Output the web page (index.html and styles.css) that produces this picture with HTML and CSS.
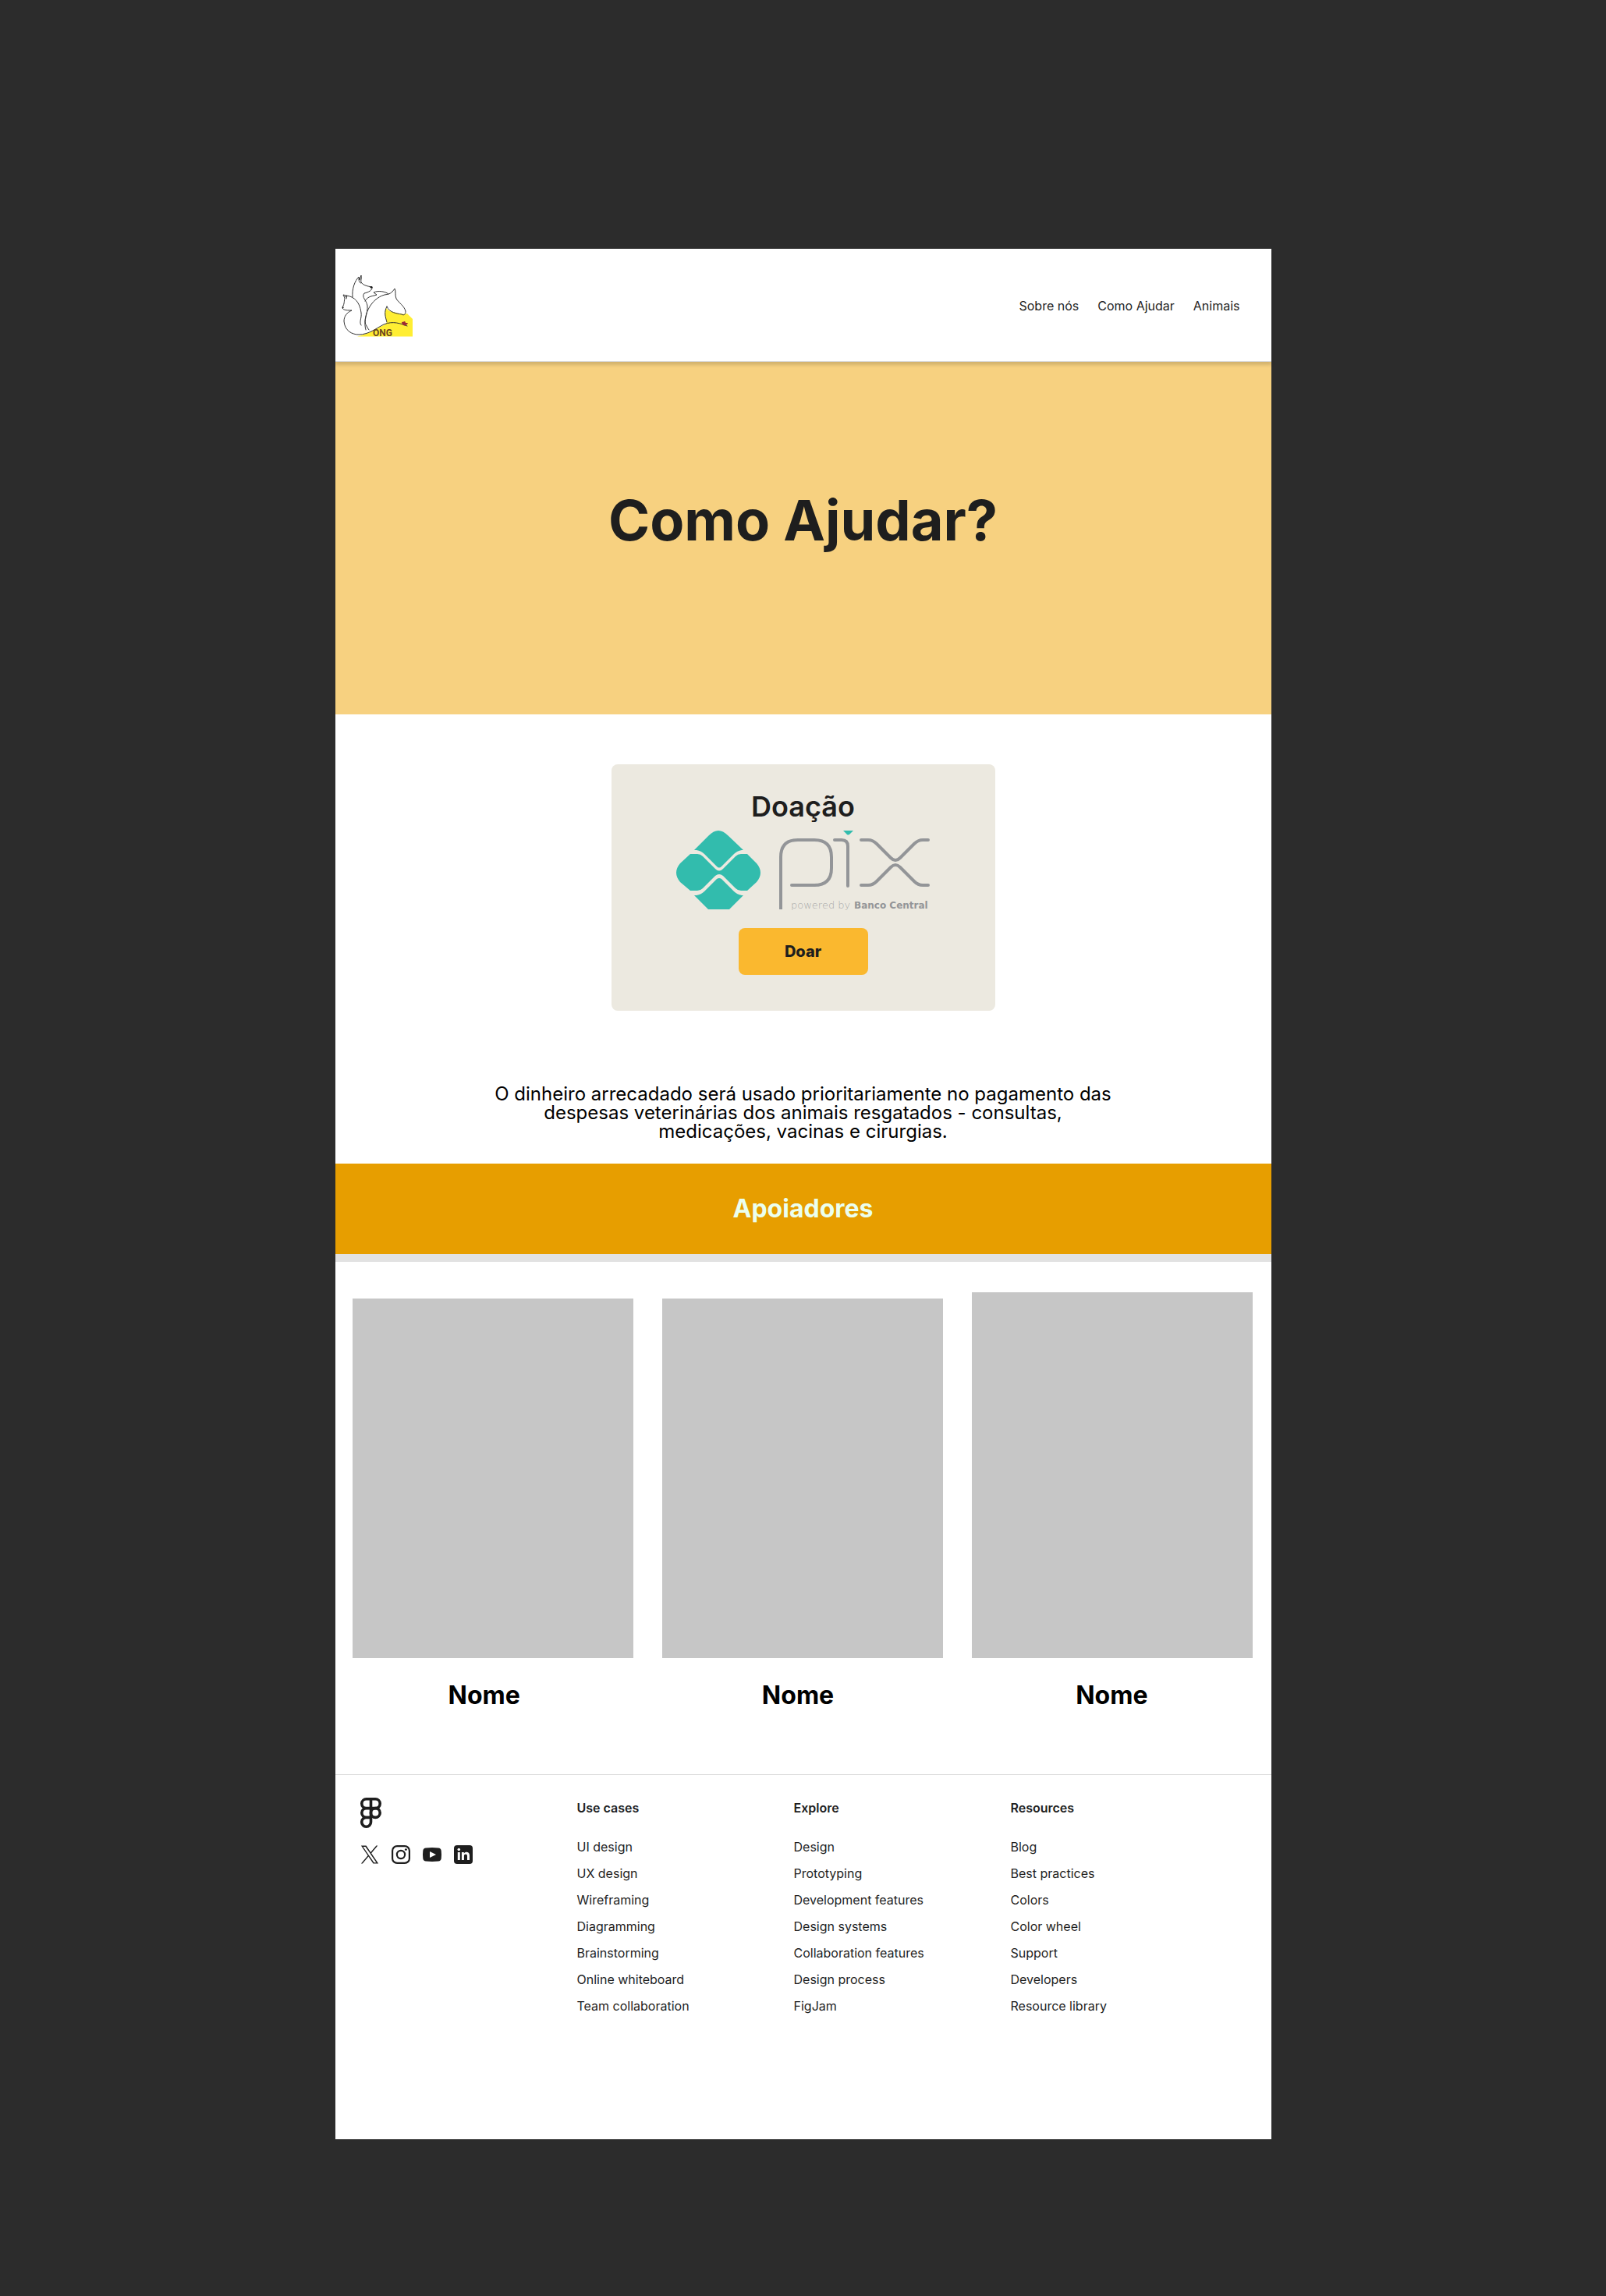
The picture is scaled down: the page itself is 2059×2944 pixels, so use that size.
FILE: index.html
```html
<!DOCTYPE html>
<html lang="pt-BR">
<head>
<meta charset="utf-8">
<meta name="viewport" content="width=device-width, initial-scale=1">
<title>Como Ajudar?</title>
<link rel="stylesheet" href="styles.css">
</head>
<body>
<div class="page">
  <header class="header">
    <a class="brand" href="#" aria-label="ONG">
      <svg class="brand-logo" viewBox="0 0 92 80" aria-hidden="true">
        <path d="M20 79.500C36 76 44 69 56 64L58 61C55 53 55 48 57 43C60 47 65 48 70 49C75 51 82 51 84 50L91 57V79.500Z" fill="#ffee33"/>
        <g fill="none" stroke="#333" stroke-width="1" stroke-linecap="round" stroke-linejoin="round">
          <path d="M14 29C13 18 17 8 22 3L23 7L25 1C26 5 24 8 25 10C28 14 33 15 39 16C40 20 34 23 29 24C25 29 32 33 33 40C34 50 27 60 32 66C33 68 34 70 35 71"/>
          <path d="M22 5C22 9 23 11 25 11"/>
          <path d="M25 65C22 61 26 56 25 49C23 33 14 28 6 27L2 26L4 30C3 34 4 37 1 42C1 45 4 46 13 46C6 49 3 54 3 60C4 72 13 77 22 77C35 77 44 69 54 64C66 59 76 63 84 66"/>
          <path d="M4 29L7 27L6 31"/>
          <path d="M31 71C26 54 37 31 55 26C64 25 65 22 68 18C70 22 68 26 70 31C74 37 80 40 82 47C82 51 80 53 77 51C71 50 61 49 58 41"/>
          <path d="M30 34C34 27 40 28 45 26L41 23C47 20 57 22 60 25"/>
          <path d="M58 41C54 48 56 54 58 61"/>
        </g>
        <path d="M38 15L40 16L38 18L36 16ZM1 41L3 42L1 44Z" fill="#111"/>
        <path d="M79 65C76 62 77 60 79 61C80 59 82 60 82 62L85 62C84 65 81 66 79 65Z" fill="#9c2b35"/>
        <text class="brand-name" x="40" y="79">ONG</text>
      </svg>
    </a>
    <nav class="nav">
      <a href="#">Sobre nós</a>
      <a href="#">Como Ajudar</a>
      <a href="#">Animais</a>
    </nav>
  </header>

  <main>
    <section class="hero">
      <h1>Como Ajudar?</h1>
    </section>

    <section class="donation">
      <div class="card">
        <h2>Doação</h2>
        <svg class="pix" viewBox="0 0 326 101" role="img" aria-label="Pix, powered by Banco Central">
          <path fill="#32bcad" d="M23 25L42 6Q54 -6 66 6L86 25H84Q78 26 74 30L58 46Q55 49 52 46L36 30Q32 26 26 25ZM18 30H27Q31 30 34 33L50 49Q55 54 60 49L76 33Q79 30 83 30H91L103 42Q113 54 103 66L91 77H83Q79 77 76 74L60 58Q55 54 50 58L34 74Q31 77 27 77H18L5 66Q-5 54 5 42ZM23 83H26Q32 82 36 78L52 62Q55 60 58 62L74 78Q78 82 84 83H86L68 101H41ZM214 0H227L223 4Q220 7 218 4Z"/>
          <g fill="none" stroke="#939598" stroke-width="4">
            <path d="M134 101V34Q134 12 156 12H177Q199 12 199 34V48Q199 70 177 70"/>
            <path stroke-linecap="round" d="M177 70H148M203 12H212Q220 12 220 20V71M237 12H246Q252 12 257 17L275 35Q281 41 287 35L305 17Q310 12 316 12H323M237 70H246Q252 70 257 65L275 47Q281 41 287 47L305 65Q310 70 316 70H323"/>
          </g>
          <text class="pix-note" x="147" y="100">powered by</text>
          <text class="pix-bank" x="228" y="100">Banco Central</text>
        </svg>
        <button class="donate" type="button">Doar</button>
      </div>
      <p class="lead">O dinheiro arrecadado será usado prioritariamente no pagamento das despesas veterinárias dos animais resgatados - consultas, medicações, vacinas e cirurgias.</p>
    </section>

    <section class="supporters">
      <h2 class="band">Apoiadores</h2>
      <div class="photos">
        <div class="photo"></div>
        <div class="photo"></div>
        <div class="photo photo-tall"></div>
      </div>
      <div class="names">
        <h3>Nome</h3>
        <h3>Nome</h3>
        <h3>Nome</h3>
      </div>
    </section>
  </main>

  <footer class="footer">
    <div class="about">
      <a class="figma" href="#" aria-label="Figma">
        <svg width="27" height="39" viewBox="0 0 27 39" fill="none" stroke="#1e1e1e" stroke-width="3.600" aria-hidden="true">
          <path d="M13.500 1.800H7.700A5.900 5.900 0 0 0 7.700 13.600H13.500ZM13.500 1.800H19.300A5.900 5.900 0 0 1 19.300 13.600H13.500ZM13.500 13.600H7.700A5.900 5.900 0 0 0 7.700 25.400H13.500ZM13.500 25.400H7.700A5.900 5.900 0 1 0 13.500 31.300Z"/>
          <circle cx="19.300" cy="19.500" r="5.900"/>
        </svg>
      </a>
      <div class="social">
        <a href="#" aria-label="X">
          <svg viewBox="0 0 24 24" aria-hidden="true"><path fill="#1e1e1e" d="M14.100 10.300L22.300 0.500H20.400L13.200 9L7.500 0.500H0.900L9.600 13.300L0.900 23.500H2.800L10.400 14.500L16.500 23.500H23.100ZM11.400 13.500L10.500 12.200L3.500 1.900H6.500L12.200 10.100L13.100 11.400L20.500 22.200H17.500Z"/></svg>
        </a>
        <a href="#" aria-label="Instagram">
          <svg viewBox="0 0 24 24" fill="none" stroke="#1e1e1e" stroke-width="2.200" aria-hidden="true"><rect x="1.100" y="1.100" width="21.800" height="21.800" rx="6"/><circle cx="12" cy="12" r="5.100"/><circle cx="18.400" cy="5.600" r="1.440" fill="#1e1e1e" stroke="none"/></svg>
        </a>
        <a href="#" aria-label="YouTube">
          <svg viewBox="0 0 24 24" aria-hidden="true"><path fill="#1e1e1e" fill-rule="evenodd" d="M4 3.500Q12 2.700 20 3.500Q23.200 3.700 23.700 7Q24.300 12 23.700 17Q23.200 20.300 20 20.500Q12 21.300 4 20.500Q0.800 20.300 0.300 17Q-0.300 12 0.300 7Q0.800 3.700 4 3.500ZM9 8V16L17 12Z"/></svg>
        </a>
        <a href="#" aria-label="LinkedIn">
          <svg viewBox="0 0 24 24" aria-hidden="true"><rect width="24" height="24" rx="4" fill="#1e1e1e"/><g fill="#fff"><circle cx="6.300" cy="5.500" r="1.800"/><path d="M4.800 9H7.800V19H4.800ZM9.900 9H12.800V10.400C14.500 8 20 7.900 20 13V19H17V13.800C17 10.500 12.900 10.700 12.900 13.800V19H9.900Z"/></g></svg>
        </a>
      </div>
    </div>
    <nav class="links" aria-labelledby="use-cases">
      <h4 id="use-cases">Use cases</h4>
      <a href="#">UI design</a>
      <a href="#">UX design</a>
      <a href="#">Wireframing</a>
      <a href="#">Diagramming</a>
      <a href="#">Brainstorming</a>
      <a href="#">Online whiteboard</a>
      <a href="#">Team collaboration</a>
    </nav>
    <nav class="links" aria-labelledby="explore">
      <h4 id="explore">Explore</h4>
      <a href="#">Design</a>
      <a href="#">Prototyping</a>
      <a href="#">Development features</a>
      <a href="#">Design systems</a>
      <a href="#">Collaboration features</a>
      <a href="#">Design process</a>
      <a href="#">FigJam</a>
    </nav>
    <nav class="links" aria-labelledby="resources">
      <h4 id="resources">Resources</h4>
      <a href="#">Blog</a>
      <a href="#">Best practices</a>
      <a href="#">Colors</a>
      <a href="#">Color wheel</a>
      <a href="#">Support</a>
      <a href="#">Developers</a>
      <a href="#">Resource library</a>
    </nav>
  </footer>
</div>
</body>
</html>
```
FILE: styles.css
```css
* {
  box-sizing: border-box;
}

body {
  margin: 0;
  padding: 319px 24px 201px;
  background: #2c2c2c;
  color: #1e1e1e;
  font-family: Inter, "Liberation Sans", sans-serif;
  font-size: 16px;
  line-height: 22px;
}

h1, h2, h3, h4, p {
  margin: 0;
}

a {
  color: inherit;
  text-decoration: none;
}

svg {
  display: block;
  overflow: visible;
}

.page {
  max-width: 1200px;
  margin: 0 auto;
  background: #fff;
}

.header {
  position: relative;
  display: flex;
  align-items: center;
  justify-content: space-between;
  padding: 33px 32px 31px 8px;
  border-bottom: 1px solid #d9d9d9;
  background: #fff;
  box-shadow: 0 4px 4px rgba(0, 0, 0, 0.15);
}

.brand-logo {
  width: 92px;
  height: 80px;
}

.brand-name {
  fill: #6b4423;
  font-family: "Liberation Sans Narrow", Roboto, sans-serif;
  font-size: 12px;
  font-weight: 700;
}

.nav {
  display: flex;
  gap: 8px;
}

.nav a {
  padding: 8px;
}

.hero {
  padding: 159px 24px 205px;
  background: #f7d180;
  text-align: center;
}

.hero h1 {
  font-size: 72px;
  font-weight: 700;
  line-height: 88px;
}

.donation {
  display: flex;
  flex-direction: column;
  align-items: center;
  padding: 64px 24px 29px;
}

.card {
  display: flex;
  flex-direction: column;
  align-items: center;
  width: 100%;
  max-width: 492px;
  padding: 32px 24px 46px;
  border-radius: 8px;
  background: #ece9e0;
}

.card h2 {
  font-size: 36px;
  font-weight: 600;
  line-height: 44px;
}

.pix {
  width: 326px;
  height: 101px;
  margin: 9px 0 24px;
}

.pix-note,
.pix-bank {
  fill: #939598;
  font-family: "DejaVu Sans", sans-serif;
}

.pix-note {
  font-size: 13px;
  font-weight: 200;
  fill-opacity: 0.8;
}

.pix-bank {
  font-size: 12px;
  font-weight: 700;
}

.donate {
  width: 166px;
  height: 60px;
  border: 0;
  border-radius: 8px;
  background: #fab82f;
  color: inherit;
  font: 800 20px/24px Inter, "Liberation Sans", sans-serif;
}

.lead {
  max-width: 800px;
  margin-top: 95px;
  color: #000;
  font-size: 24px;
  line-height: 24px;
  text-align: center;
}

.band {
  padding: 38px 24px;
  border-bottom: 10px solid #e2e2e2;
  background: #e79e00;
  color: #ebffee;
  font-size: 32px;
  line-height: 40px;
  text-align: center;
}

.photos {
  display: grid;
  grid-template-columns: repeat(3, 1fr);
  align-items: end;
  gap: 37px;
  padding: 39px 24px 0 22px;
}

.photo {
  height: 461px;
  background: #c6c6c6;
}

.photo-tall {
  height: 469px;
}

.names {
  display: flex;
  justify-content: space-between;
  padding: 28px 158px 81px 145px;
  color: #000;
}

.names h3 {
  font-size: 32px;
  line-height: 40px;
}

.footer {
  display: grid;
  grid-template-columns: repeat(4, 1fr);
  gap: 16px;
  padding: 29px 72px 160px 32px;
  border-top: 1px solid #d9d9d9;
}

.about {
  display: flex;
  flex-direction: column;
  align-items: flex-start;
  gap: 22px;
}

.social {
  display: flex;
  gap: 16px;
}

.social svg {
  width: 24px;
  height: 24px;
}

.links {
  display: flex;
  flex-direction: column;
  gap: 12px;
  padding-top: 2px;
}

.links h4 {
  margin-bottom: 16px;
  font-size: 16px;
  font-weight: 600;
}
```
